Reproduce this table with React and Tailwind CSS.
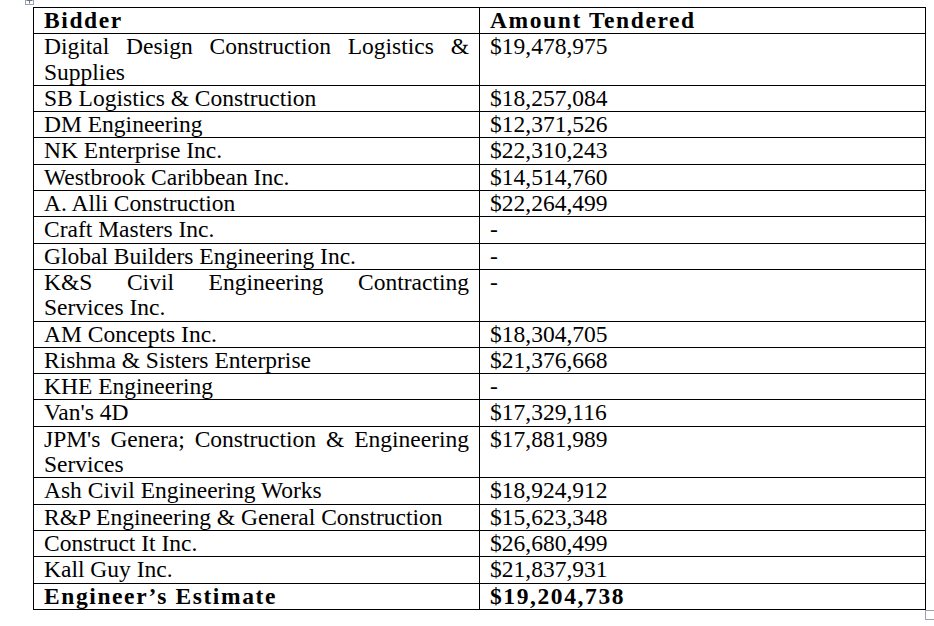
import React from "react";

const rows = [
  { name: ["Digital Design Construction Logistics &", "Supplies"], amount: "$19,478,975" },
  { name: "SB Logistics & Construction", amount: "$18,257,084" },
  { name: "DM Engineering", amount: "$12,371,526" },
  { name: "NK Enterprise Inc.", amount: "$22,310,243" },
  { name: "Westbrook Caribbean Inc.", amount: "$14,514,760" },
  { name: "A. Alli Construction", amount: "$22,264,499" },
  { name: "Craft Masters Inc.", amount: "-" },
  { name: "Global Builders Engineering Inc.", amount: "-" },
  { name: ["K&S Civil Engineering Contracting", "Services Inc."], amount: "-" },
  { name: "AM Concepts Inc.", amount: "$18,304,705" },
  { name: "Rishma & Sisters Enterprise", amount: "$21,376,668" },
  { name: "KHE Engineering", amount: "-" },
  { name: "Van's 4D", amount: "$17,329,116" },
  { name: ["JPM's Genera; Construction & Engineering", "Services"], amount: "$17,881,989" },
  { name: "Ash Civil Engineering Works", amount: "$18,924,912" },
  { name: "R&P Engineering & General Construction", amount: "$15,623,348" },
  { name: "Construct It Inc.", amount: "$26,680,499" },
  { name: "Kall Guy Inc.", amount: "$21,837,931" },
];

export default function App() {
  return (
    <div className="relative w-[934px] h-[626px] bg-white overflow-hidden font-['Liberation_Serif',serif] text-black text-[23.5px] leading-[25.3px]">
      <div className="absolute left-[25px] top-[-4px] w-[9px] h-[9px] border border-gray-400 bg-white">
        <svg width="7" height="7" viewBox="0 0 7 7" className="block">
          <path d="M3.5 0.5V6.5M0.5 3.5H6.5" stroke="#6b7280" strokeWidth="1" fill="none" />
        </svg>
      </div>
      <div className="pt-[7px] pl-[33px]">
        <table className="border-collapse w-[892px] table-fixed">
          <colgroup>
            <col className="w-[446px]" />
            <col className="w-[446px]" />
          </colgroup>
          <tbody>
            <tr>
              <td className="border border-black px-[10px] py-0 font-bold tracking-[1.6px] align-top">Bidder</td>
              <td className="border border-black px-[10px] py-0 font-bold tracking-[1.6px] align-top">Amount Tendered</td>
            </tr>
            {rows.map((r, i) => (
              <tr key={i}>
                <td className="border border-black px-[10px] py-0 align-top">
                  {Array.isArray(r.name) ? (
                    <>
                      <span className="block whitespace-nowrap text-justify [text-align-last:justify]">{r.name[0]}</span>
                      <span className="block">{r.name[1]}</span>
                    </>
                  ) : (
                    r.name
                  )}
                </td>
                <td className="border border-black px-[10px] py-0 align-top">{r.amount}</td>
              </tr>
            ))}
            <tr>
              <td className="border border-black px-[10px] py-0 font-bold tracking-[1.6px] align-top">Engineer’s Estimate</td>
              <td className="border border-black px-[10px] py-0 font-bold tracking-[1.6px] align-top">$19,204,738</td>
            </tr>
          </tbody>
        </table>
      </div>
      <div className="absolute left-[925px] top-[610px] w-[10px] h-[10px] border border-gray-400 bg-white" />
    </div>
  );
}
